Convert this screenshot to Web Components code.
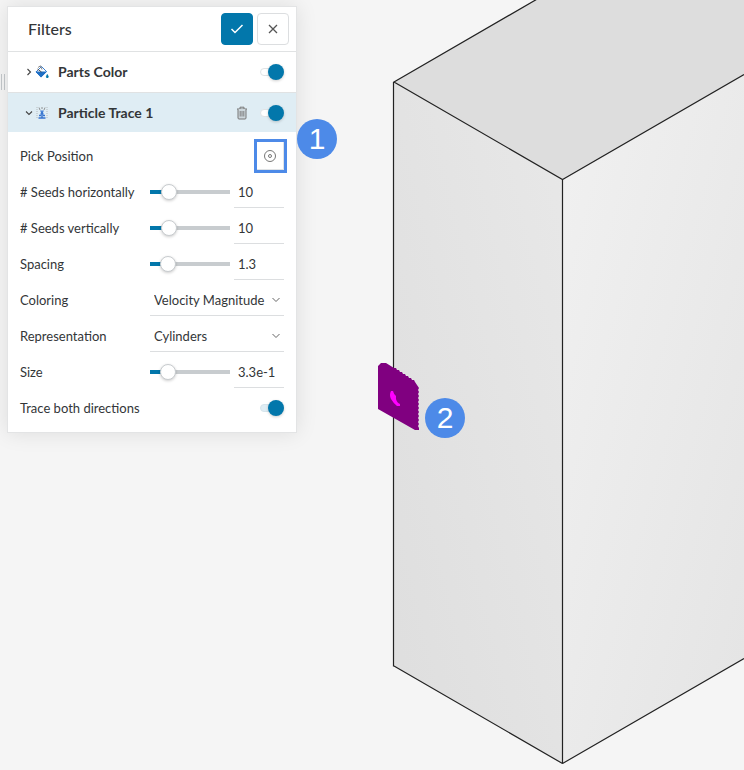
<!DOCTYPE html>
<html lang="en">
<head>
<meta charset="utf-8">
<title>Particle trace filters</title>
<style>
html, body { height: 100%; }
body { margin: 0; background: #f5f5f5; color: #333638; font: 14px/20px Lato, "Open Sans", sans-serif; overflow: hidden; }
</style>
</head>
<body>
<filter-app></filter-app>
<script>
const define = (name, html, setup) => customElements.define(name, class extends HTMLElement {
  connectedCallback() {
    if (this.shadowRoot) return;
    const root = this.attachShadow({ mode: 'open' });
    const t = document.createElement('template');
    t.innerHTML = '<style>:host,*{box-sizing:border-box}</style>' + html;
    root.append(t.content.cloneNode(true));
    if (setup) setup(this, root);
  }
});

const jagged = (() => {
  let p = 'M378 366 L381 363 L386 363 L394 368';
  for (let x = 394; x < 415; x += 3) p += ' l2 0 l1 2';
  p += ' L419 388';
  for (let y = 388; y < 426; y += 4) p += ' l-1 2 l1 2';
  p += ' L419 430 L415 430 L378 409 Z';
  return p;
})();

define('model-view', `
<style>
:host { display: block; }
svg { display: block; width: 100%; height: 100%; }
.edge { fill: none; stroke: #222; stroke-width: 1.2; }
</style>
<svg viewBox="0 0 744 770" preserveAspectRatio="xMinYMin slice" role="img" aria-label="Box model with seed plane">
  <defs>
    <linearGradient id="left" x1="0" y1="1" x2="1" y2="0"><stop offset="0" stop-color="#dedede"/><stop offset="1" stop-color="#e8e8e8"/></linearGradient>
    <linearGradient id="right" x1="0" y1="0" x2="1" y2="1"><stop offset="0" stop-color="#f1f1f1"/><stop offset="1" stop-color="#e4e4e4"/></linearGradient>
  </defs>
  <polygon points="394,82 540,-3 880,-3 562,179" fill="#dddddd"/>
  <polygon points="394,82 562,179 562,763 394,666" fill="url(#left)"/>
  <polygon points="562,179 744,74 744,658 562,763" fill="url(#right)"/>
  <path class="edge" d="M539 -2 L394 82 L562.5 179.5 L744 74.500 M562.5 763.5 L744 658.5 M394 666 L562.5 763.5"/>
  <path class="edge" d="M393.500 82V666.500M562.500 179.500V763.500"/>
  <path d="${jagged}" fill="#800080"/>
  <path d="M391 391q-2 4 0 8q3 5 6 7h3v-2q-3-1-4-5v-3q-2-1-3-5z" fill="#f0f"/>
</svg>`);

define('callout-badge', `
<style>
:host { display: grid; place-items: center; width: 40px; height: 40px; border-radius: 50%; background: #4d8ae8; color: #fff; font: 30px/40px "Liberation Sans", sans-serif; }
</style><slot></slot>`);

define('icon-button', `
<style>
:host { display: block; }
button { display: grid; place-items: center; width: 32px; height: 32px; padding: 0; border: 1px solid #dcdee0; border-radius: 4px; background: #fff; color: #555; }
:host([kind=primary]) button { background: #0277ab; border-color: #0277ab; color: #fff; }
:host([kind=bare]) button { width: 16px; height: 16px; border: 0; background: none; }
:host([kind=marked]) { margin-right: -3px; }
:host([kind=marked]) button { width: 33px; height: 34px; border: 3px solid #4d8ae8; border-radius: 0; box-shadow: inset -1px -1px #e0e3e5; }
</style>
<button type="button"><slot></slot></button>`, (el, root) => {
  root.querySelector('button').setAttribute('aria-label', el.getAttribute('label'));
});

define('toggle-switch', `
<style>
:host { display: block; width: 24px; height: 16px; }
label { display: grid; align-items: center; width: 24px; height: 16px; }
input, .track { grid-area: 1 / 1; }
.track { height: 8px; border: 1px solid #e0e3e5; border-radius: 4px; background: #fff; }
:host([tinted]) .track { background: #dfedf4; border-color: #d6e4eb; }
input { appearance: none; justify-self: end; width: 16px; height: 16px; margin: 0; border-radius: 50%; background: #0277ab; box-shadow: 0 1px 3px #0003; z-index: 1; }
input:not(:checked) { justify-self: start; background: #fff; }
</style>
<label><span class="track"></span><input type="checkbox" role="switch" checked></label>`, (el, root) => {
  root.querySelector('input').setAttribute('aria-label', el.getAttribute('label'));
});

define('filter-row', `
<style>
:host { display: block; border-top: 1px solid #e0e2e3; }
.row { display: flex; align-items: center; height: 40px; padding: 0 12px 0 16px; }
:host([open]) .row { background: #dfedf4; height: 39px; }
h2 { flex: 1; margin: 0 0 0 8px; font-size: 14px; line-height: 20px; font-weight: 700; }
button { display: grid; place-items: center; padding: 0; width: 10px; height: 16px; border: 0; background: none; color: #444; }
:host([open]) .chev { transform: rotate(90deg); }
.icon { display: grid; place-items: center; width: 16px; height: 16px; }
.actions { display: flex; align-items: center; gap: 10px; }
</style>
<div class="row">
  <button type="button" aria-label="Expand"><svg class="chev" width="8" height="8" viewBox="0 0 8 8" fill="none" stroke="currentColor" stroke-width="1.1"><path d="M2.500 1 5.500 4 2.500 7"/></svg></button>
  <div class="icon"><slot name="icon"></slot></div>
  <h2><slot></slot></h2>
  <div class="actions"><slot name="actions"></slot></div>
</div>`);

define('field-row', `
<style>
:host { display: flex; align-items: center; height: 36px; font-size: 13px; }
label { width: 130px; flex: none; white-space: nowrap; }
.box { flex: 1; display: flex; justify-content: flex-end; min-width: 0; }
</style>
<label></label><div class="box"><slot></slot></div>`, (el, root) => {
  const label = root.querySelector('label');
  label.textContent = el.getAttribute('label');
  label.addEventListener('click', () => {
    el.firstElementChild.shadowRoot.querySelector('input, select, button').focus();
  });
});

define('slider-field', `
<style>
:host { display: flex; flex: 1; gap: 4px; align-items: center; min-width: 0; }
.range { appearance: none; flex: 1; min-width: 0; height: 16px; margin: 0; border-radius: 2px;
  background: linear-gradient(to right, #0277ab 20%, #c8cccf 20%) center / 100% 4px no-repeat; }
.range::-webkit-slider-thumb { appearance: none; width: 16px; height: 16px; border: 1px solid #c8cccf; border-radius: 50%; background: #fff; box-shadow: 0 1px 3px #0003; }
.value { width: 50px; height: 32px; padding: 0 4px; border: 0; border-bottom: 1px solid #dcdee0; background: none; color: inherit; font: inherit; }
</style>
<input class="range" type="range" min="0" max="100"><input class="value" type="text">`, (el, root) => {
  const range = root.querySelector('.range'), value = root.querySelector('.value');
  range.value = el.getAttribute('position');
  value.value = el.getAttribute('value');
  range.setAttribute('aria-label', el.getAttribute('label') + ' slider');
  value.setAttribute('aria-label', el.getAttribute('label'));
});

define('select-field', `
<style>
:host { display: grid; flex: 1; align-items: center; min-width: 0; }
select, svg { grid-area: 1 / 1; }
select { appearance: none; width: 100%; height: 32px; padding: 0 16px 0 4px; border: 0; border-bottom: 1px solid #dcdee0; border-radius: 0; background: none; color: inherit; font: inherit; }
svg { justify-self: end; margin-right: 3px; pointer-events: none; }
</style>
<select><option></option></select>
<svg width="10" height="8" viewBox="0 0 10 8" fill="none" stroke="#666"><path d="M1.500 2 5 5.500 8.500 2"/></svg>`, (el, root) => {
  root.querySelector('option').textContent = el.getAttribute('value');
  root.querySelector('select').setAttribute('aria-label', el.getAttribute('label'));
});

define('filter-panel', `
<style>
:host { display: block; background: #fff; border: 1px solid #e3e4e5; box-shadow: 0 0 20px #0000001a; }
header { display: flex; align-items: center; gap: 4px; height: 44px; padding: 0 7px 0 20px; }
h1 { flex: 1; margin: 0; font-size: 16px; line-height: 20px; font-weight: 500; }
.fields { padding: 6px 12px; }
svg { display: block; }
</style>
<header>
  <h1>Filters</h1>
  <icon-button kind="primary" label="Apply"><svg width="14" height="12" viewBox="0 0 14 12" fill="none" stroke="currentColor" stroke-width="1.500"><path d="M1.500 6 5 9.500 12.500 2"/></svg></icon-button>
  <icon-button label="Close"><svg width="10" height="10" viewBox="0 0 10 10" fill="none" stroke="currentColor" stroke-width="1.300"><path d="M1 1 9 9M9 1 1 9"/></svg></icon-button>
</header>
<filter-row>
  <svg slot="icon" width="14" height="14" viewBox="0 0 14 14"><path d="M6.500 1.500 11.500 6.500 6 12 1 7Z" fill="#fff" stroke="#3b7fd0"/><path d="M.5 6.500 12 6.500 6 12.500Z" fill="#1f6fc4"/><path d="M2.500 4 6.500 7" fill="none" stroke="#444" stroke-width=".9"/><path d="M3 2.500 5.500.8 7 4.500" fill="none" stroke="#666" stroke-width=".8"/><path d="M12.300 9.500q2 3 0 3.500q-2-.5 0-3.500" fill="#0277ab" stroke="#0277ab" stroke-width=".8"/></svg>
  Parts Color
  <toggle-switch slot="actions" label="Parts Color"></toggle-switch>
</filter-row>
<filter-row open>
  <svg slot="icon" width="12" height="12" viewBox="0 0 12 12"><path d="M1 0v12M11 0v12" stroke="#b5babd" stroke-dasharray="1 1"/><path d="M3 .5 4 3M9 .5 8 3M6 0v2" stroke="#888" stroke-width=".9"/><path d="M4 3.500h4l-1 2 1 2H4l1-2z" fill="#4a85d8"/><path d="M3 8.500h2M7 8.500h2M2.500 11h7M6 5v6" stroke="#3673ce" stroke-width="1.500"/></svg>
  Particle Trace 1
  <icon-button slot="actions" kind="bare" label="Delete"><svg width="12" height="14" viewBox="0 0 12 14" fill="none" stroke="#777"><path d="M1 3h10M4 3V1.200h4V3"/><path d="M2 3V12q0 1 1 1h6q1 0 1-1V3" fill="#ccd6db"/><path d="M4.200 5v5.500M6 5v5.500M7.800 5v5.500" stroke-width=".9"/></svg></icon-button>
  <toggle-switch slot="actions" label="Particle Trace 1"></toggle-switch>
</filter-row>
<div class="fields">
  <field-row label="Pick Position"><icon-button kind="marked" label="Pick Position"><svg width="13" height="14" viewBox="0 0 13 14" fill="none" stroke="#777"><circle cx="6" cy="7" r="5.500"/><circle cx="6" cy="7" r="1.500"/></svg></icon-button></field-row>
  <field-row label="# Seeds horizontally"><slider-field label="# Seeds horizontally" position="17" value="10"></slider-field></field-row>
  <field-row label="# Seeds vertically"><slider-field label="# Seeds vertically" position="17" value="10"></slider-field></field-row>
  <field-row label="Spacing"><slider-field label="Spacing" position="16" value="1.3"></slider-field></field-row>
  <field-row label="Coloring"><select-field label="Coloring" value="Velocity Magnitude"></select-field></field-row>
  <field-row label="Representation"><select-field label="Representation" value="Cylinders"></select-field></field-row>
  <field-row label="Size"><slider-field label="Size" position="16" value="3.3e-1"></slider-field></field-row>
  <field-row label="Trace both directions"><toggle-switch tinted label="Trace both directions"></toggle-switch></field-row>
</div>`);

define('filter-app', `
<style>
:host { display: grid; grid-template-columns: 7px minmax(0, 290px) 1fr; align-items: start; position: relative; height: 100%; padding-top: 6px; }
model-view { position: absolute; inset: 0; }
.grip { position: relative; width: 4px; height: 16px; margin: 68px 0 0 1px; border: solid #c4c8cb; border-width: 0 1px; }
filter-panel { position: relative; }
callout-badge { position: absolute; }
.one { left: 297px; top: 119px; }
.two { left: 425px; top: 398px; }
</style>
<model-view></model-view>
<div class="grip"></div>
<filter-panel></filter-panel>
<callout-badge class="one">1</callout-badge>
<callout-badge class="two">2</callout-badge>`);
</script>
</body>
</html>
